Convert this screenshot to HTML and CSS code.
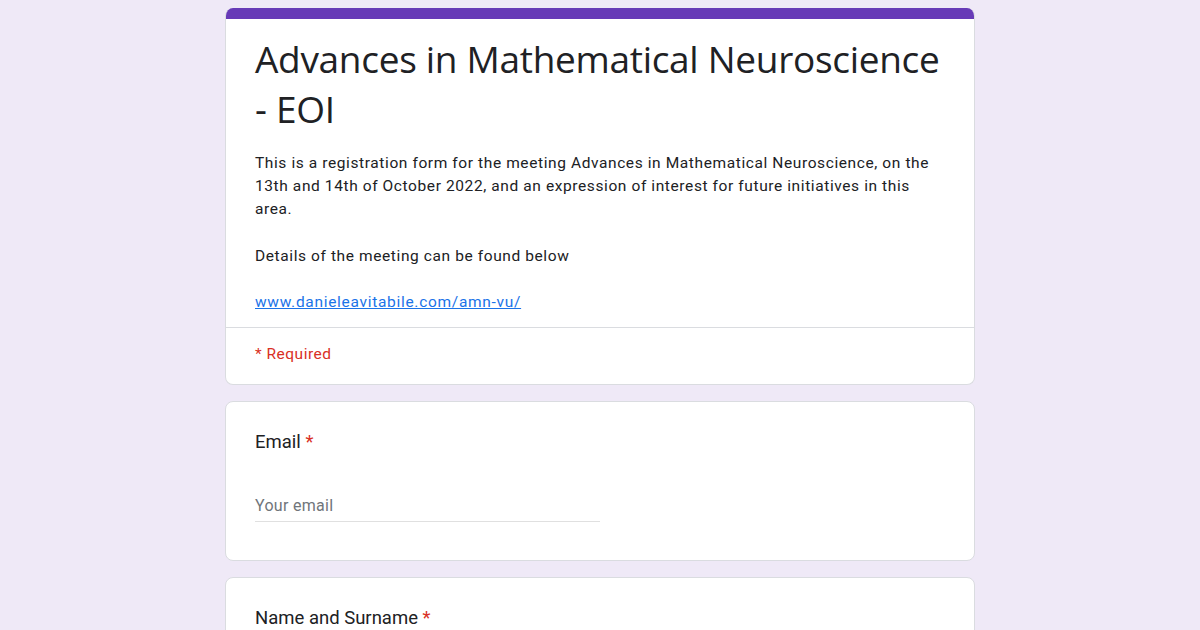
FILE: index.html
```html
<!DOCTYPE html>
<html>
<head>
<meta charset="utf-8">
<link rel="stylesheet" href="styles.css">
</head>
<body>
<div class="page">
  <div class="card header-card">
    <div class="accent"></div>
    <div class="header-body">
      <h1 class="title">Advances in Mathematical Neuroscience - EOI</h1>
      <div class="desc">
        <p>This is a registration form for the meeting Advances in Mathematical Neuroscience, on the 13th and 14th of October 2022, and an expression of interest for future initiatives in this area.</p>
        <p>Details of the meeting can be found below</p>
        <p><a class="link" href="#">www.danieleavitabile.com/amn-vu/</a></p>
      </div>
    </div>
    <div class="required-row">* Required</div>
  </div>

  <div class="card question">
    <div class="q-title">Email <span class="star">*</span></div>
    <div class="input">Your email</div>
  </div>

  <div class="card question">
    <div class="q-title">Name and Surname <span class="star">*</span></div>
    <div class="input">Your answer</div>
  </div>
</div>
</body>
</html>
```

FILE: styles.css
```css
html, body {
  margin: 0;
  padding: 0;
  background: #efe9f7;
  height: 630px;
  overflow: hidden;
}
body {
  font-family: Roboto, "Liberation Sans", Arial, sans-serif;
  color: #202124;
}
.page {
  width: 750px;
  margin: 0 auto;
  padding-top: 8px;
  display: flex;
  flex-direction: column;
  gap: 16px;
}
.card {
  background: #fff;
  border: 1px solid #dadce0;
  border-radius: 8px;
  overflow: hidden;
}
.header-card {
  border-top: none;
  border-radius: 8px;
}
.accent {
  height: 11px;
  background: #673ab7;
}
.header-body {
  padding: 15px 29px 13px 29px;
  border-bottom: 1px solid #dadce0;
}
.title {
  margin: 0;
  font-family: "Open Sans", Roboto, sans-serif;
  font-weight: 400;
  font-size: 37px;
  line-height: 50px;
  letter-spacing: -0.3px;
  color: #202124;
}
.desc {
  margin-top: 18px;
  font-size: 15.5px;
  line-height: 23.2px;
  letter-spacing: 0.6px;
  color: #202124;
}
.desc p {
  margin: 0 0 23.2px 0;
}
.desc p:last-child {
  margin-bottom: 0;
}
.link {
  color: #1a73e8;
  text-decoration: underline;
  letter-spacing: 0.7px;
}
.required-row {
  padding: 15px 29px 19px 29px;
  color: #d93025;
  font-size: 15.5px;
  line-height: 22px;
  letter-spacing: 0.5px;
}
.question {
  padding: 27px 29px 38px 29px;
}
.q-title {
  font-size: 18.5px;
  line-height: 26px;
  color: #202124;
}
.star {
  color: #d93025;
}
.input {
  margin-top: 40px;
  width: 345px;
  font-size: 16px;
  line-height: 22px;
  letter-spacing: 0.3px;
  color: #70757a;
  padding-bottom: 4px;
  border-bottom: 1px solid #e0e0e0;
}
```
